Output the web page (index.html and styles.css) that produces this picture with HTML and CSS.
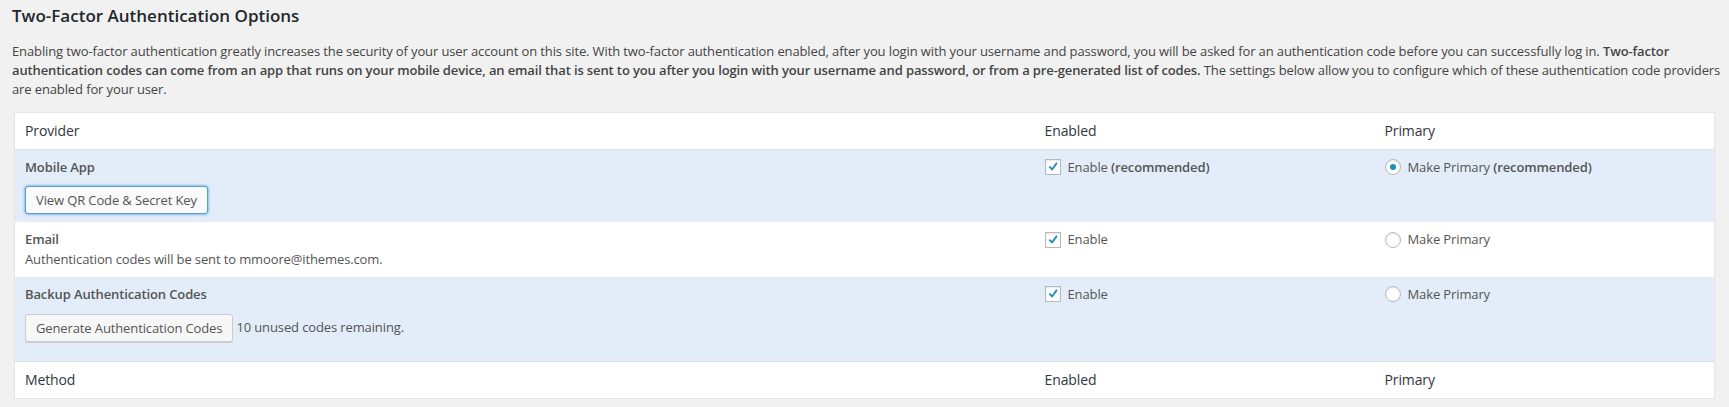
FILE: index.html
```html
<!DOCTYPE html>
<html lang="en">
<head>
    <meta charset="UTF-8">
    <title>Two-Factor Authentication Options</title>
    <link rel="stylesheet" href="styles.css">
</head>
<body>
  <div class="wrap">
    <h2 class="section-title">Two-Factor Authentication Options</h2>
    <p class="intro"><span>Enabling two-factor authentication greatly increases the security of your user account on this site. With two-factor authentication enabled, after you login with your username and password, you will be asked for an authentication code before you can successfully log in.</span> <strong>Two-factor</strong> <strong>authentication codes can come from an app that runs on your mobile device, an email that is sent to you after you login with your username and password, or from a pre-generated list of codes.</strong> <span>The settings below allow you to configure which of these authentication code providers</span> <span>are enabled for your user.</span></p>

    <table class="providers">
      <colgroup>
        <col>
        <col class="col-narrow">
        <col class="col-narrow">
      </colgroup>
      <thead>
        <tr><th>Provider</th><th>Enabled</th><th>Primary</th></tr>
      </thead>
      <tbody>
        <tr class="alternate">
          <td>
            <div class="provider-name">Mobile App</div>
            <div class="provider-action">
              <button class="button button-focus" type="button">View QR Code &amp; Secret Key</button>
            </div>
          </td>
          <td>
            <label class="choice">
              <span class="checkbox"><svg viewBox="0 0 16 16" width="16" height="16"><path d="M3 8.2 L4.5 6.8 L6.9 9.2 L11.6 2.6 L13.3 3.9 L7.1 12.4 Z" fill="#1e8cbe"/></svg></span>
              <span>Enable <strong>(recommended)</strong></span>
            </label>
          </td>
          <td>
            <label class="choice">
              <span class="radio radio-checked"></span>
              <span>Make Primary <strong>(recommended)</strong></span>
            </label>
          </td>
        </tr>
        <tr>
          <td>
            <div class="provider-name">Email</div>
            <div class="provider-desc">Authentication codes will be sent to mmoore@ithemes.com.</div>
          </td>
          <td>
            <label class="choice">
              <span class="checkbox"><svg viewBox="0 0 16 16" width="16" height="16"><path d="M3 8.2 L4.5 6.8 L6.9 9.2 L11.6 2.6 L13.3 3.9 L7.1 12.4 Z" fill="#1e8cbe"/></svg></span>
              <span>Enable</span>
            </label>
          </td>
          <td>
            <label class="choice">
              <span class="radio"></span>
              <span>Make Primary</span>
            </label>
          </td>
        </tr>
        <tr class="alternate">
          <td>
            <div class="provider-name">Backup Authentication Codes</div>
            <div class="provider-action provider-action-last">
              <button class="button" type="button">Generate Authentication Codes</button>
              <span class="codes-left">10 unused codes remaining.</span>
            </div>
          </td>
          <td>
            <label class="choice">
              <span class="checkbox"><svg viewBox="0 0 16 16" width="16" height="16"><path d="M3 8.2 L4.5 6.8 L6.9 9.2 L11.6 2.6 L13.3 3.9 L7.1 12.4 Z" fill="#1e8cbe"/></svg></span>
              <span>Enable</span>
            </label>
          </td>
          <td>
            <label class="choice">
              <span class="radio"></span>
              <span>Make Primary</span>
            </label>
          </td>
        </tr>
      </tbody>
      <tfoot>
        <tr><th>Method</th><th>Enabled</th><th>Primary</th></tr>
      </tfoot>
    </table>
  </div>
</body>
</html>
```

FILE: styles.css
```css
body {
    margin: 0;
    background-color: #f1f1f1;
    color: #444;
    font-family: "Open Sans", "Noto Sans", sans-serif;
    font-size: 13px;
    line-height: 1.5;
    letter-spacing: -0.12px;
}

.wrap {
    padding: 5px 14px 0 12px;
}

.section-title {
    margin: 0;
    font-size: 17px;
    line-height: 22px;
    font-weight: 600;
    letter-spacing: 0;
    color: #23282d;
}

.intro {
    margin: 15px -10px 13px 0;
    line-height: 19px;
}

.intro strong {
    font-weight: 600;
}

.providers {
    width: calc(100% - 2px);
    margin-left: 2px;
    border-collapse: collapse;
    table-layout: fixed;
    background-color: #fff;
    border: 1px solid #e5e5e5;
    box-shadow: 0 1px 1px rgba(0,0,0,0.04);
}

.col-narrow {
    width: 340px;
}

.providers th {
    text-align: left;
    font-weight: 400;
    font-size: 14px;
    line-height: 1.4em;
    color: #32373c;
    padding: 8px 10px;
}

.providers thead th {
    border-bottom: 1px solid #e1e1e1;
}

.providers tfoot th {
    border-top: 1px solid #e1e1e1;
}

.providers td {
    vertical-align: top;
    padding: 8px 10px;
    color: #555;
}

.providers tr.alternate {
    background-color: #e2edf9;
}

.provider-name {
    font-weight: 600;
}

.provider-desc {
    line-height: 19px;
}

.provider-action {
    display: flex;
    align-items: center;
    gap: 3px;
    margin-top: 9px;
}

.provider-action-last {
    margin-top: 10px;
    margin-bottom: 11px;
}

.button {
    height: 28px;
    padding: 0 10px 1px;
    font-family: inherit;
    font-size: 13px;
    letter-spacing: inherit;
    line-height: 26px;
    color: #555;
    background: #f7f7f7;
    border: 1px solid #ccc;
    border-radius: 3px;
    box-shadow: 0 1px 0 #ccc;
    cursor: pointer;
}

.button-focus {
    background: #fafafa;
    border-color: #5b9dd9;
    box-shadow: 0 0 3px rgba(0,115,170,0.8);
}

.choice {
    display: flex;
    align-items: center;
    gap: 7px;
    height: 19.5px;
}

.choice strong {
    font-weight: 600;
}

.checkbox {
    box-sizing: border-box;
    width: 16px;
    height: 16px;
    border: 1px solid #b4b9be;
    background: #fff;
    box-shadow: inset 0 1px 2px rgba(0,0,0,0.1);
    display: flex;
    align-items: center;
    justify-content: center;
}

.checkbox svg {
    width: 14px;
    height: 14px;
}

.radio {
    box-sizing: border-box;
    width: 16px;
    height: 16px;
    border: 1px solid #b4b9be;
    border-radius: 50%;
    background: #fff;
    box-shadow: inset 0 1px 2px rgba(0,0,0,0.1);
    display: flex;
    align-items: center;
    justify-content: center;
}

.radio-checked::before {
    content: "";
    width: 6px;
    height: 6px;
    border-radius: 50%;
    background: #1e8cbe;
}
```
